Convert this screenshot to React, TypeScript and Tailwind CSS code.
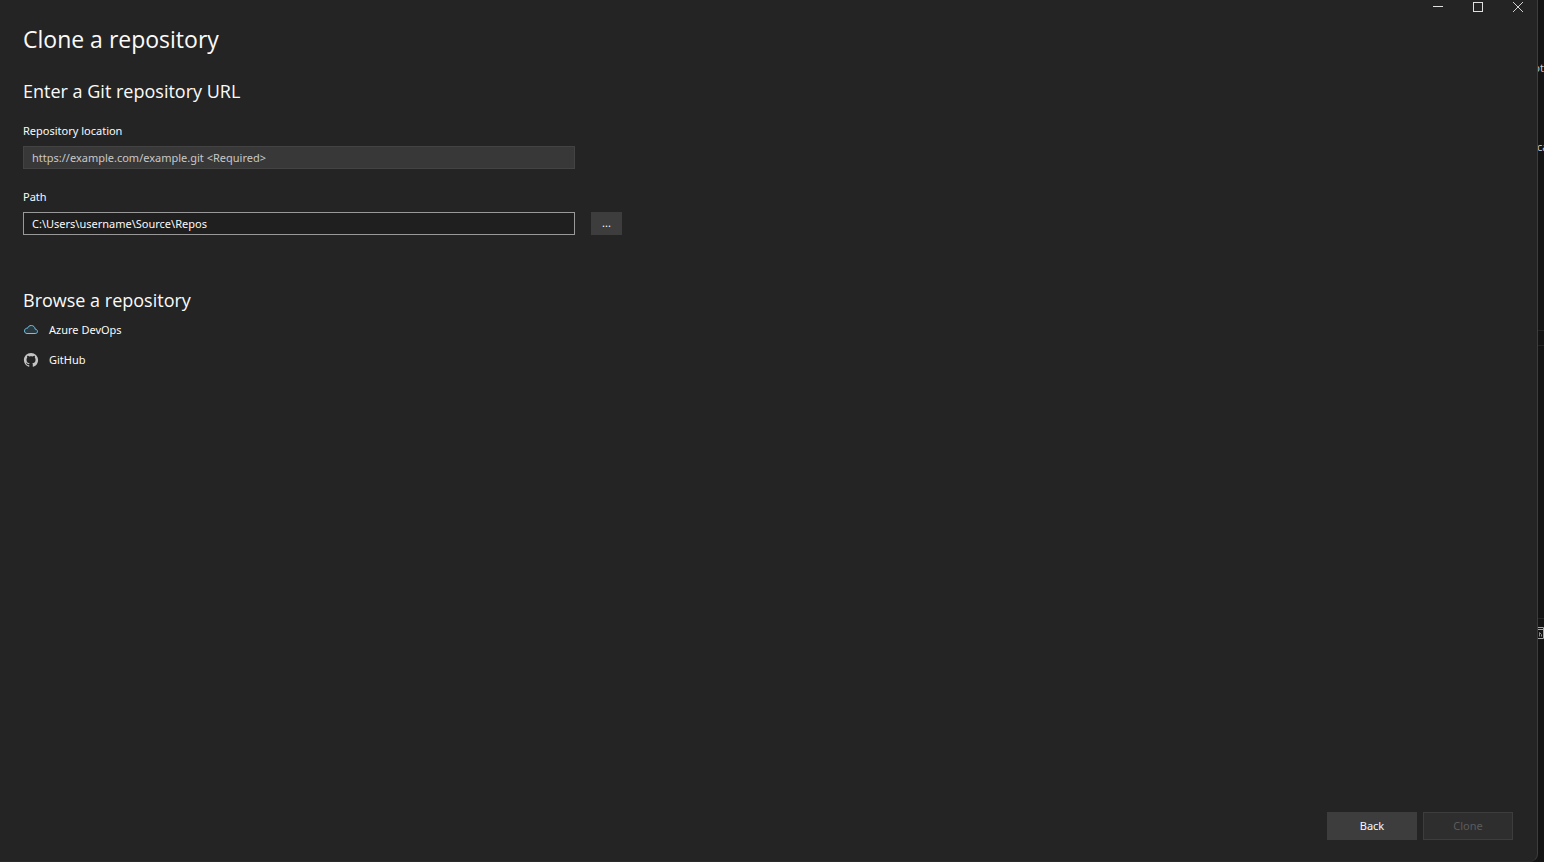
import React, { useState } from 'react';

const CloudIcon = () => (
  <svg width="16" height="16" viewBox="0 0 16 16" fill="none" aria-hidden="true">
    <path
      d="M4 11.5H12.200C13.600 11.500 14.500 10.700 14.500 9.400C14.500 8.200 13.500 7.200 12.200 7.200C12 5 10.400 3.500 8.300 3.500C6.500 3.500 5.100 4.500 4.600 6.200C2.700 6 1.500 7.300 1.500 8.900C1.500 10.500 2.600 11.500 4 11.500Z"
      fill="#2a3940"
      stroke="#6fc3e6"
    />
  </svg>
);

const GitHubIcon = () => (
  <svg width="16" height="16" viewBox="-1 -1 18 18" fill="#c4c4c4" aria-hidden="true">
    <path d="M8 0C3.58 0 0 3.58 0 8c0 3.54 2.29 6.53 5.47 7.59.4.07.55-.17.55-.38 0-.19-.01-.82-.01-1.49-2.01.37-2.53-.49-2.69-.94-.09-.23-.48-.94-.82-1.13-.28-.15-.68-.52-.01-.53.63-.01 1.08.58 1.23.82.72 1.21 1.87.87 2.33.66.07-.52.28-.87.51-1.07-1.78-.2-3.64-.89-3.64-3.95 0-.87.31-1.59.82-2.15-.08-.2-.36-1.02.08-2.12 0 0 .67-.21 2.2.82.64-.18 1.32-.27 2-.27s1.36.09 2 .27c1.53-1.04 2.2-.82 2.2-.82.44 1.1.16 1.92.08 2.12.51.56.82 1.27.82 2.15 0 3.07-1.87 3.75-3.65 3.95.29.25.54.73.54 1.48 0 1.07-.01 1.93-.01 2.2 0 .21.15.46.55.38A8.01 8.01 0 0 0 16 8c0-4.42-3.58-8-8-8Z" />
  </svg>
);

const WindowControls = () => (
  <header className="-mr-px flex h-3.5 justify-end">
    <button type="button" aria-label="Minimize" className="flex w-10 items-center justify-center">
      <svg width="10" height="10" viewBox="0 0 10 10" stroke="#e0e0e0" shapeRendering="crispEdges">
        <path d="M0 4.5h10" />
      </svg>
    </button>
    <button type="button" aria-label="Maximize" className="flex w-10 items-center justify-center">
      <svg width="10" height="10" viewBox="0 0 10 10" fill="none" stroke="#e0e0e0" shapeRendering="crispEdges">
        <path d="M.5.5h9v9h-9z" />
      </svg>
    </button>
    <button type="button" aria-label="Close" className="flex w-10 items-center justify-center">
      <svg width="10" height="10" viewBox="0 0 10 10" stroke="#d0d0d0">
        <path d="m0 0 10 10M10 0 0 10" />
      </svg>
    </button>
  </header>
);

// Sliver of the editor window that shows behind the dialog
const EditorEdge = () => (
  <aside aria-hidden="true" className="relative w-1.5 shrink-0 overflow-hidden bg-[#141414] leading-4 text-[#c8c8c8]">
    <span className="absolute right-0 top-15">ot</span>
    <span className="absolute -left-px top-[139px]">ca</span>
    <span className="absolute left-0 top-[330px] h-4 w-full border-y border-[#242424]" />
    <span className="absolute left-0 top-[618px] h-px w-full bg-[#242424]" />
    <svg className="absolute right-0 top-[627px]" width="12" height="12" viewBox="0 0 12 12" fill="none" stroke="#a8a8a8">
      <path d="M0 .5h11.500v11H0M0 2.500h11.500" />
      <path d="M7.500 9.500v-4l2 2v2" stroke="#8a8a9a" />
    </svg>
  </aside>
);

const App: React.FC = () => {
  const [location, setLocation] = useState('');
  const [path, setPath] = useState('C:\\Users\\username\\Source\\Repos');

  return (
    <div className="flex min-h-screen bg-[#141414] font-['Noto_Sans',sans-serif] text-[11px] text-[#fafafa]">
      <div className="flex min-w-0 flex-1 flex-col rounded-br-lg border-r border-b border-r-[#3d3d3d] border-b-[#2b2b2b] bg-[#242424]">
        <WindowControls />

        <main className="flex-1 px-6 pt-[9px] pl-[23px]">
          <h1 className="font-['Open_Sans',sans-serif] text-[23px] leading-8">Clone a repository</h1>

          <section className="mt-6">
            <h2 className="font-['Open_Sans',sans-serif] text-lg leading-6">Enter a Git repository URL</h2>

            <label htmlFor="location" className="mt-5 block leading-4">
              Repository location
            </label>
            <input
              id="location"
              type="text"
              value={location}
              onChange={(e) => setLocation(e.target.value)}
              placeholder="https://example.com/example.git <Required>"
              className="mt-[7px] block h-[23px] w-full max-w-[552px] border border-[#434343] bg-[#383838] px-2 placeholder:text-[#c8c8c8]"
            />

            <label htmlFor="path" className="mt-5 block leading-4">
              Path
            </label>
            <div className="mt-[7px] flex gap-4">
              <input
                id="path"
                type="text"
                value={path}
                onChange={(e) => setPath(e.target.value)}
                className="h-[23px] w-full max-w-[552px] border border-[#999999] bg-[#1f1f1f] px-2"
              />
              <button type="button" aria-label="Browse folders" className="h-[23px] w-[31px] shrink-0 bg-[#3d3d3d]">
                ...
              </button>
            </div>
          </section>

          <section className="mt-[53px]">
            <h2 className="font-['Open_Sans',sans-serif] text-lg leading-6">Browse a repository</h2>
            <ul className="mt-2 flex flex-col items-start gap-2.5">
              <li>
                <a href="#azure" className="flex h-5 items-center gap-2.5">
                  <CloudIcon />
                  Azure DevOps
                </a>
              </li>
              <li>
                <a href="#github" className="flex h-5 items-center gap-2.5">
                  <GitHubIcon />
                  GitHub
                </a>
              </li>
            </ul>
          </section>
        </main>

        <footer className="flex justify-end gap-1.5 px-6 pb-[21px]">
          <button type="button" className="h-7 w-[90px] bg-[#3d3d3d]">
            Back
          </button>
          <button type="button" disabled className="h-7 w-[90px] border border-[#3d3d3d] bg-[#2e2e2e] text-[#5c5c5c]">
            Clone
          </button>
        </footer>
      </div>
      <EditorEdge />
    </div>
  );
};

export default App;
